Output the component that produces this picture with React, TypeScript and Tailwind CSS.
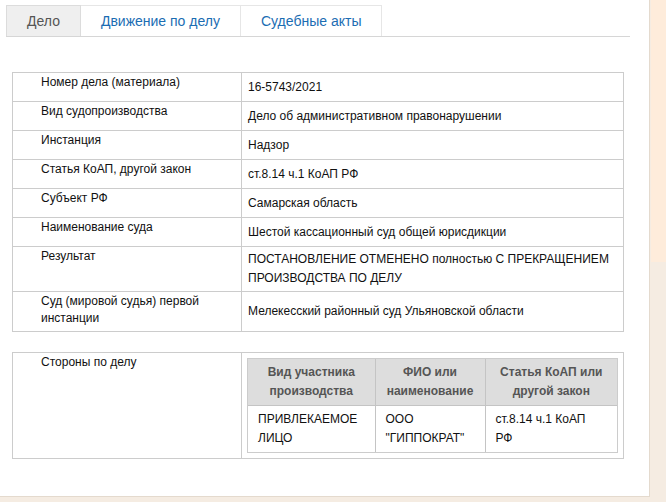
import React from 'react';

const rows: { label: string; value: React.ReactNode }[] = [
  { label: 'Номер дела (материала)', value: '16-5743/2021' },
  { label: 'Вид судопроизводства', value: 'Дело об административном правонарушении' },
  { label: 'Инстанция', value: 'Надзор' },
  { label: 'Статья КоАП, другой закон', value: 'ст.8.14 ч.1 КоАП РФ' },
  { label: 'Субъект РФ', value: 'Самарская область' },
  { label: 'Наименование суда', value: 'Шестой кассационный суд общей юрисдикции' },
  {
    label: 'Результат',
    value: 'ПОСТАНОВЛЕНИЕ ОТМЕНЕНО полностью С ПРЕКРАЩЕНИЕМ ПРОИЗВОДСТВА ПО ДЕЛУ',
  },
  { label: 'Суд (мировой судья) первой инстанции', value: 'Мелекесский районный суд Ульяновской области' },
];

const tabs = ['Дело', 'Движение по делу', 'Судебные акты'];

export default function App() {
  return (
    <div
      className="flex h-[502px] w-[666px] overflow-hidden bg-[#f5ece2] text-[12px] text-[#111]"
      style={{ fontFamily: '"Liberation Sans", Arial, sans-serif' }}
    >
      {/* Main white panel */}
      <div className="h-[497px] w-[650px] shrink-0 border-r border-b border-[#e4dace] bg-white">
        {/* Tabs */}
        <div className="ml-[6px] mt-[5px] flex w-[624px] border-b border-[#d6d6d6]">
          {tabs.map((t, i) => (
            <div
              key={t}
              className={
                i === 0
                  ? 'border border-b-0 border-[#dcdcdc] bg-[#efefef] px-[20px] text-[14px] leading-[30px] text-[#555]'
                  : 'border border-b-0 border-l-0 border-[#e6e6e6] bg-white px-[20px] text-[14px] leading-[30px] text-[#1b6db3]'
              }
            >
              {t}
            </div>
          ))}
        </div>

        {/* Case info */}
        <table className="ml-[12px] mt-[35px] w-[612px] border-collapse">
          <tbody>
            {rows.map((r) => (
              <tr key={r.label} className="h-[29px]">
                <td className="w-[229px] border border-[#cccccc] pb-[4px] pl-[28px] pr-2 pt-[1px] align-top leading-[17px]">
                  {r.label}
                </td>
                <td className="border border-[#cccccc] px-[6px] py-[3px] align-middle leading-[19px]">
                  {r.value}
                </td>
              </tr>
            ))}
          </tbody>
        </table>

        {/* Parties */}
        <table className="ml-[12px] mt-[20px] w-[612px] border-collapse">
          <tbody>
            <tr>
              <td className="w-[229px] border border-[#cccccc] pl-[28px] pr-2 pt-[1px] align-top leading-[17px]">
                Стороны по делу
              </td>
              <td className="border border-[#cccccc] p-[5px] align-top">
                <div className="border border-[#cccccc]">
                  <table className="w-full border-collapse">
                    <thead>
                      <tr className="bg-[#dddddd] font-bold text-[#555]">
                        <th className="w-[127px] border-r border-b border-[#c4c4c4] px-2 py-[4px] text-center leading-[19px]">
                          Вид участника производства
                        </th>
                        <th className="w-[110px] border-r border-b border-[#c4c4c4] px-2 py-[4px] text-center leading-[19px]">
                          ФИО или наименование
                        </th>
                        <th className="border-b border-[#c4c4c4] px-2 py-[4px] text-center leading-[19px]">
                          Статья КоАП или другой закон
                        </th>
                      </tr>
                    </thead>
                    <tbody>
                      <tr>
                        <td className="border-r border-[#c4c4c4] px-[10px] py-[4px] align-top leading-[19px]">
                          ПРИВЛЕКАЕМОЕ ЛИЦО
                        </td>
                        <td className="border-r border-[#c4c4c4] px-[10px] py-[4px] align-top leading-[19px]">
                          ООО "ГИППОКРАТ"
                        </td>
                        <td className="py-[4px] pl-[10px] pr-[18px] align-top leading-[19px]">
                          ст.8.14 ч.1 КоАП РФ
                        </td>
                      </tr>
                    </tbody>
                  </table>
                </div>
              </td>
            </tr>
          </tbody>
        </table>
      </div>

      {/* Right strip */}
      <div className="flex-1">
        <div className="ml-[1px] h-[262px] bg-[#feecdb]" />
      </div>
    </div>
  );
}
